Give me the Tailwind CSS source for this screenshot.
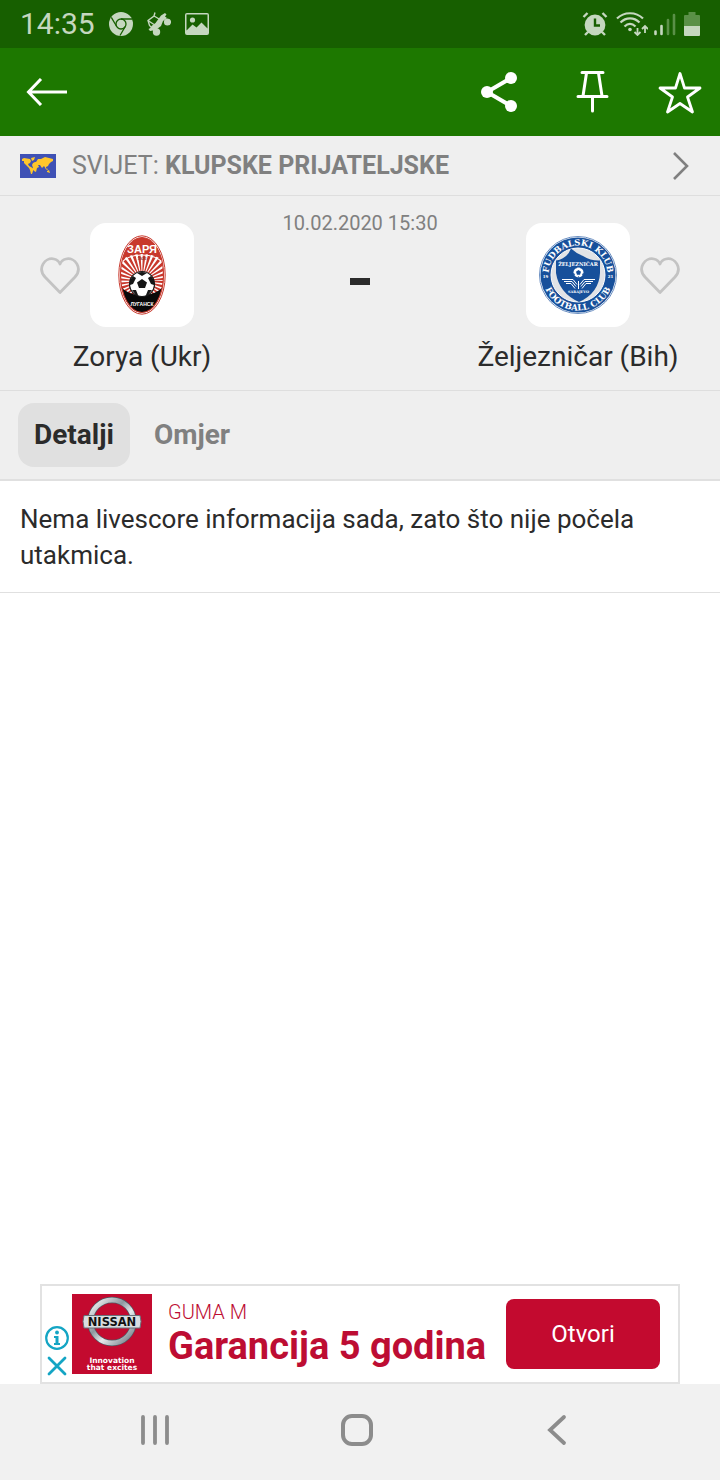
<!DOCTYPE html>
<html lang="bs">
<head>
<meta charset="utf-8">
<meta name="viewport" content="width=device-width, initial-scale=1">
<title>Zorya – Željezničar</title>
<script src="https://cdn.jsdelivr.net/npm/@tailwindcss/browser@4"></script>
</head>
<body class="flex min-h-screen flex-col bg-white font-['Roboto',sans-serif] text-[#2b2b2b]">

<!-- Status bar -->
<div class="flex h-12 items-center justify-between bg-[#175f00] pr-5 pl-5 text-[#c5d7bf]">
  <div class="flex items-center">
    <span class="text-[30px] leading-12">14:35</span>
    <svg class="ml-3.5 size-6" viewBox="0 0 24 24" aria-hidden="true">
      <circle cx="12" cy="12" r="12" fill="currentColor"/>
      <g fill="none" stroke="#175f00" stroke-width="1.3"><circle cx="12" cy="12" r="5"/><path d="M12 7H23M7.7 14.5L2.3 5.3M16.3 14.5L11 23.5"/></g>
    </svg>
    <svg class="ml-3.5 size-6" viewBox="0 0 24 24" fill="currentColor" aria-hidden="true">
      <path d="M14 3.500L18 1l1.500 1.500L18 4.500l2 1.500-4 3-2 5-4 3-4 1.500L3 19l-1.500-2 2-1 1-2 4-3z"/>
      <circle cx="20.500" cy="10" r="3.600"/><circle cx="9.500" cy="20" r="3.700"/>
      <path d="M8 .500L7 4 1 8.500l1.500 5L5 16M7 4l6 3.500M1 8.500l6 4" fill="none" stroke="currentColor" stroke-width="1.400"/>
    </svg>
    <svg class="ml-3.5 size-6" viewBox="0 0 24 24" aria-hidden="true">
      <path fill="currentColor" fill-rule="evenodd" d="M2 1h20a2 2 0 0 1 2 2v18a2 2 0 0 1-2 2H2a2 2 0 0 1-2-2V3a2 2 0 0 1 2-2zm-.500 1.500v16l6-6 4 3 5-5 6 6V2.500z"/><circle cx="7.500" cy="8" r="2.600" fill="currentColor"/>
    </svg>
  </div>
  <div class="flex items-center">
    <svg class="h-6 w-[26px]" viewBox="0 0 26 24" aria-hidden="true">
      <circle cx="13" cy="13" r="10.400" fill="currentColor"/>
      <path d="M1.500 5l4-4M24.500 5l-4-4M6 20l-3 3M20 20l3 3" stroke="currentColor" stroke-width="2.400"/>
      <path d="M13 6.500V13.500H18" fill="none" stroke="#175f00" stroke-width="2.400"/>
    </svg>
    <svg class="ml-2 h-6 w-8" viewBox="0 0 32 24" fill="none" stroke="currentColor" stroke-width="2.200" aria-hidden="true">
      <path d="M1 6.500C8-.500 20-.500 27 6.500M4.500 10.500C10 5 18 5 23.500 10.500M8.500 14.500C12 11 16 11 19.500 14.500"/>
      <circle cx="14" cy="17.500" r="1.800" fill="currentColor" stroke="none"/>
      <path stroke-width="1.800" d="M21.500 16v7M18.500 20l3 3 3-3M29 21v-7M26 17l3-3 3 3"/>
    </svg>
    <svg class="ml-1.5 h-6 w-[22px]" viewBox="0 0 22 24" stroke="currentColor" stroke-width="2.600" stroke-linecap="round" aria-hidden="true">
      <path d="M1.500 19.500V22M7.500 14V22"/><path d="M14 8V22M20 3V22" stroke="#5a9047"/>
    </svg>
    <svg class="ml-2 h-6 w-4" viewBox="0 0 16 24" aria-hidden="true"><path d="M4.500 0h7v3H15a1 1 0 0 1 1 1v10H0V4a1 1 0 0 1 1-1h3.500z" fill="#5a9047"/><path d="M0 14h16v9a1 1 0 0 1-1 1H1a1 1 0 0 1-1-1z" fill="currentColor"/></svg>
  </div>
</div>

<!-- App bar -->
<header class="flex h-22 items-center justify-between bg-[#1d7800] pr-[18px] pl-[26px] text-white">
  <button type="button" aria-label="Nazad">
    <svg class="h-7 w-[42px]" viewBox="0 0 42 28" fill="none" stroke="currentColor" stroke-width="3"><path d="M41 14H2.500M15 1L2.500 14 15 27"/></svg>
  </button>
  <div class="flex items-center">
    <button type="button" aria-label="Podijeli">
      <svg class="h-11 w-10" viewBox="0 0 40 44" fill="currentColor"><path d="M31 8L7 22l24 14" fill="none" stroke="currentColor" stroke-width="4"/><circle cx="31" cy="8" r="6"/><circle cx="7" cy="22" r="6"/><circle cx="31" cy="36" r="6"/></svg>
    </button>
    <button type="button" class="ml-[54px]" aria-label="Zakači">
      <svg class="h-11 w-9" viewBox="0 0 36 44" fill="none" stroke="currentColor" stroke-width="3" stroke-linecap="round"><path d="M8 2.500h21M4 26.500h29M12.500 3L9 26M24.500 3L28 26M18.500 27v14"/></svg>
    </button>
    <button type="button" class="ml-12" aria-label="Omiljeno">
      <svg class="size-11" viewBox="0 0 44 44" fill="none" stroke="currentColor" stroke-width="2.800" stroke-linejoin="round"><path d="M22 3.500L26.500 18H42L29.500 27 34.500 42 22 33.500 9.500 42 14.500 27 2 18H17.500z"/></svg>
    </button>
  </div>
</header>

<main class="flex flex-1 flex-col">
  <!-- Competition -->
  <a href="#" class="flex h-15 items-center border-b border-[#dedede] bg-[#efefef] pr-[30px] pl-5 text-[#808080]">
    <svg class="h-6 w-9" viewBox="0 0 36 24" aria-hidden="true">
      <path fill="#3f51b5" d="M0 0h36v24H0z"/>
      <path fill="#ffc62b" d="M2 5l2-1 6 1 1 2-1 2-2 1 1 2 2 1 3 2-1 2-1 3h-1l-1-4-1-2-3-3-2-2V7H2zM11 4l4-1-1 3-2 1zM16 8l2-3 3 0 4-2 4 1 4 1v2l-2 1-2 2-1 2-2 1v2l-2-3-2 2-2-3-2 0 1 2-2 1-1 4-2-1-1-3-1-3 1-2 2-1zM25 14l3 1-1 1zM27 17l2-1 1 3-3-1z"/>
    </svg>
    <span class="ml-4 text-[25px]">SVIJET: <b class="font-bold">KLUPSKE PRIJATELJSKE</b></span>
    <svg class="ml-auto h-8 w-[18px]" viewBox="0 0 18 32" fill="none" stroke="currentColor" stroke-width="2.600" aria-hidden="true"><path d="M2 3l13 13L2 29"/></svg>
  </a>

  <!-- Match header -->
  <section class="grid h-[195px] grid-cols-[1fr_152px_1fr] border-b border-[#dedede] bg-[#efefef]">
    <div class="flex flex-col items-center pt-[27px]">
      <div class="grid grid-cols-[40px_104px_40px] items-center gap-2.5">
        <button type="button" aria-label="Prati Zorya">
          <svg class="size-10" viewBox="0 0 40 40" fill="none" stroke="#c3c3c3" stroke-width="2.800" stroke-linejoin="round"><path d="M20 37.500L5 22C-3 13 5 2 14 4c3 .600 5 2.500 6 5 1-2.500 3-4.400 6-5 9-2 17 9 9 18z"/></svg>
        </button>
        <div class="flex size-26 items-center justify-center rounded-2xl bg-white">
          <svg class="h-20 w-12" viewBox="0 0 48 80" role="img" aria-label="Zorya">
            <defs><clipPath id="oval"><ellipse cx="24" cy="40" rx="21.500" ry="37.500"/></clipPath></defs>
            <ellipse cx="24" cy="40" rx="23.200" ry="39.200" fill="#fff" stroke="#c8382c" stroke-width="1"/>
            <g clip-path="url(#oval)">
              <path fill="#fff" d="M0 0h48v80H0z"/>
              <circle cx="24" cy="46" r="20" fill="none" stroke="#c8382c" stroke-width="40" stroke-dasharray="2.200 1.727"/>
              <path fill="#c8382c" d="M0 0h48v30Q42 19 24 19T0 30z"/>
              <path d="M2 29Q9 20 24 20t22 9" fill="none" stroke="#fff" stroke-width="1.200"/>
              <path d="M0 46c6 19 42 19 48 0v34H0z" fill="#090909"/>
            </g>
            <ellipse cx="24" cy="40" rx="21.500" ry="37.500" fill="none" stroke="#c8382c" stroke-width="1.200"/>
            <g fill="#fff" text-anchor="middle" font-family="Liberation Sans, sans-serif" font-weight="700">
              <text x="24" y="17.500" font-size="11">ЗАРЯ</text>
              <text x="24" y="24.500" font-size="4" fill="#8d3b35">1923</text>
              <text x="24" y="71" font-size="5">ЛУГАНСК</text>
            </g>
            <circle cx="24" cy="49" r="12.500" fill="#fff" stroke="#161616" stroke-width="1.200"/>
            <g fill="#161616"><path d="M24 44l5 3.500-2 5.500h-6l-2-5.500zM19 38q5-2 10 0l-5 3zM12 45l3-4 3 2-3 6-3 1zM36 45l-3-4-3 2 3 6 3 1zM14 55l4 0 2 5-2 0zM34 55h-4l-2 5h2z"/></g>
          </svg>
        </div>
      </div>
      <h2 class="mt-3 text-[28px] leading-9 whitespace-nowrap">Zorya (Ukr)</h2>
    </div>
    <div class="flex flex-col items-center pt-[13px]">
      <time class="text-xl leading-7 whitespace-nowrap text-[#808080]" datetime="2020-02-10T15:30">10.02.2020 15:30</time>
      <div class="mt-[41px] h-[7px] w-5 bg-[#2b2b2b]" role="img" aria-label="Bez rezultata"></div>
    </div>
    <div class="flex flex-col items-center pt-[27px]">
      <div class="grid grid-cols-[40px_104px_40px] items-center gap-2.5">
        <div class="col-start-2 flex size-26 items-center justify-center rounded-2xl bg-white">
          <svg class="size-20" viewBox="0 0 80 80" role="img" aria-label="Željezničar">
            <defs><path id="top" d="M10.500 40a29.500 29.500 0 0 1 59 0"/><path id="bottom" d="M4.500 40a35.500 35.500 0 0 0 71 0"/></defs>
            <circle cx="40" cy="40" r="38.500" fill="#fff" stroke="#6b8fc2" stroke-width="1"/>
            <circle cx="40" cy="40" r="37.500" fill="#17509b"/>
            <circle cx="40" cy="40" r="27" fill="#e1e3e6" stroke="#fff" stroke-width="1"/>
            <path d="M33 13.500q6 5.500 12 7.500 8 5 17 4.500V38Q61 58 41 67 21 58 18 38V25.500Q29 24 33 13.500z" fill="#17509b"/>
            <g fill="#fff" font-family="DejaVu Serif, serif" font-weight="700" text-anchor="middle">
              <text font-size="8.500"><textPath href="#top" startOffset="50%">FUDBALSKI KLUB</textPath></text>
              <text font-size="8.500"><textPath href="#bottom" startOffset="50%">FOOTBALL CLUB</textPath></text>
              <text x="7.500" y="43" font-size="4">19</text><text x="72.500" y="43" font-size="4">21</text>
              <text x="40" y="31" font-size="5">ŽELJEZNIČAR</text>
              <text x="40.500" y="58" font-size="3.500">SARAJEVO</text>
            </g>
            <circle cx="40.500" cy="37.500" r="5" fill="#fff"/>
            <path fill="#17509b" d="M40.500 35l2.500 1.800-1 3h-3l-1-3zM37 32l2 0-1 2zM44 32h-2l1 2zM35 38l2 1-1 2zM46 38l-2 1 1 2zM39.500 42.500h2l-1-1.500z"/>
            <path fill="none" stroke="#fff" stroke-width="1" d="M24 44.500h11l4 5M26 46.500h8l4 5M28 48.500h5l4 5M57 44.500H46l-4 5M55 46.500h-8l-4 5M53 48.500h-5l-4 5M40.500 46v8"/>
          </svg>
        </div>
        <button type="button" aria-label="Prati Željezničar">
          <svg class="size-10" viewBox="0 0 40 40" fill="none" stroke="#c3c3c3" stroke-width="2.800" stroke-linejoin="round"><path d="M20 37.500L5 22C-3 13 5 2 14 4c3 .600 5 2.500 6 5 1-2.500 3-4.400 6-5 9-2 17 9 9 18z"/></svg>
        </button>
      </div>
      <h2 class="mt-3 text-[28px] leading-9 whitespace-nowrap">Željezničar (Bih)</h2>
    </div>
  </section>

  <!-- Tabs -->
  <nav class="flex h-[90px] items-center gap-2 border-b-2 border-[#e0e0e0] bg-[#efefef] px-[18px] text-[28px] font-bold">
    <button type="button" class="h-16 rounded-2xl bg-[#e0e0e0] px-4">Detalji</button>
    <button type="button" class="h-16 px-4 text-[#808080]">Omjer</button>
  </nav>

  <p class="border-b border-[#e0e0e0] px-5 pt-5 pb-[19px] text-[26px] leading-9">Nema livescore informacija sada, zato što nije počela utakmica.</p>

  <!-- Ad banner -->
  <aside class="mx-10 mt-auto flex h-25 items-center border-2 border-[#e2e2e2] bg-white pr-[18px] pl-[3px]">
    <div class="flex flex-col gap-1.5 self-end pb-1.5 text-[#14a5c4]">
      <button type="button" class="h-6" aria-label="O oglasu"><svg class="size-6" viewBox="0 0 24 24"><circle cx="12" cy="12" r="10.800" fill="none" stroke="currentColor" stroke-width="2.200"/><circle cx="12" cy="6.500" r="1.900" fill="currentColor"/><path d="M9 10h4.500v7H15v2H9v-2h1.500v-5H9z" fill="currentColor"/></svg></button>
      <button type="button" class="h-5" aria-label="Zatvori oglas"><svg class="h-5 w-6" viewBox="0 0 24 20" fill="none" stroke="currentColor" stroke-width="2.800" stroke-linecap="round"><path d="M4 2l16 16M20 2L4 18"/></svg></button>
    </div>
    <svg class="ml-[3px] size-20 shrink-0" viewBox="0 0 80 80" role="img" aria-label="Nissan">
      <defs><linearGradient id="chrome" x1="0" y1="0" x2="1" y2="1"><stop offset="0" stop-color="#fff"/><stop offset=".400" stop-color="#8d979f"/><stop offset=".600" stop-color="#e6eaec"/><stop offset="1" stop-color="#66727c"/></linearGradient></defs>
      <path fill="#c30a2f" d="M0 0h80v80H0z"/>
      <circle cx="40" cy="27.500" r="21.500" fill="none" stroke="#4e5861" stroke-width="6.400"/>
      <circle cx="40" cy="27.500" r="21.500" fill="none" stroke="url(#chrome)" stroke-width="5"/>
      <path d="M12 21.500h56l1 6-1 6.500H12l-1-6.500z" fill="#d9dee1" stroke="#69737b" stroke-width="1"/>
      <text x="40" y="31.500" text-anchor="middle" font-family="DejaVu Sans, sans-serif" font-weight="700" font-size="11.500" fill="#111">NISSAN</text>
      <g text-anchor="middle" font-family="DejaVu Sans, sans-serif" font-weight="700" font-size="7.500" fill="#fff"><text x="40" y="69">Innovation</text><text x="40" y="76">that excites</text></g>
    </svg>
    <div class="ml-4 whitespace-nowrap text-[#bd0d33]">
      <p class="text-xl leading-6 font-light">GUMA M</p>
      <p class="text-[38px] leading-11 font-bold">Garancija 5 godina</p>
    </div>
    <a href="#" class="ml-auto flex h-[70px] w-[154px] items-center justify-center rounded-lg bg-[#c30a2f] text-2xl text-white">Otvori</a>
  </aside>
</main>

<!-- System navigation -->
<nav class="flex h-24 items-center justify-around bg-[#f1f1f1] pr-[60px] pb-1 pl-[54px] text-[#8c8c8c]">
  <button type="button" aria-label="Nedavno"><svg class="size-8" viewBox="0 0 32 32" stroke="currentColor" stroke-width="3.800" stroke-linecap="round"><path d="M4 3v26M16 3v26M28 3v26"/></svg></button>
  <button type="button" aria-label="Početna"><svg class="size-8" viewBox="0 0 32 32" fill="none" stroke="currentColor" stroke-width="4"><rect x="2" y="2" width="28" height="28" rx="9"/></svg></button>
  <button type="button" aria-label="Natrag"><svg class="size-8" viewBox="0 0 32 32" fill="none" stroke="currentColor" stroke-width="3.800" stroke-linecap="round"><path d="M21 3L7 16l14 13"/></svg></button>
</nav>
</body>
</html>
